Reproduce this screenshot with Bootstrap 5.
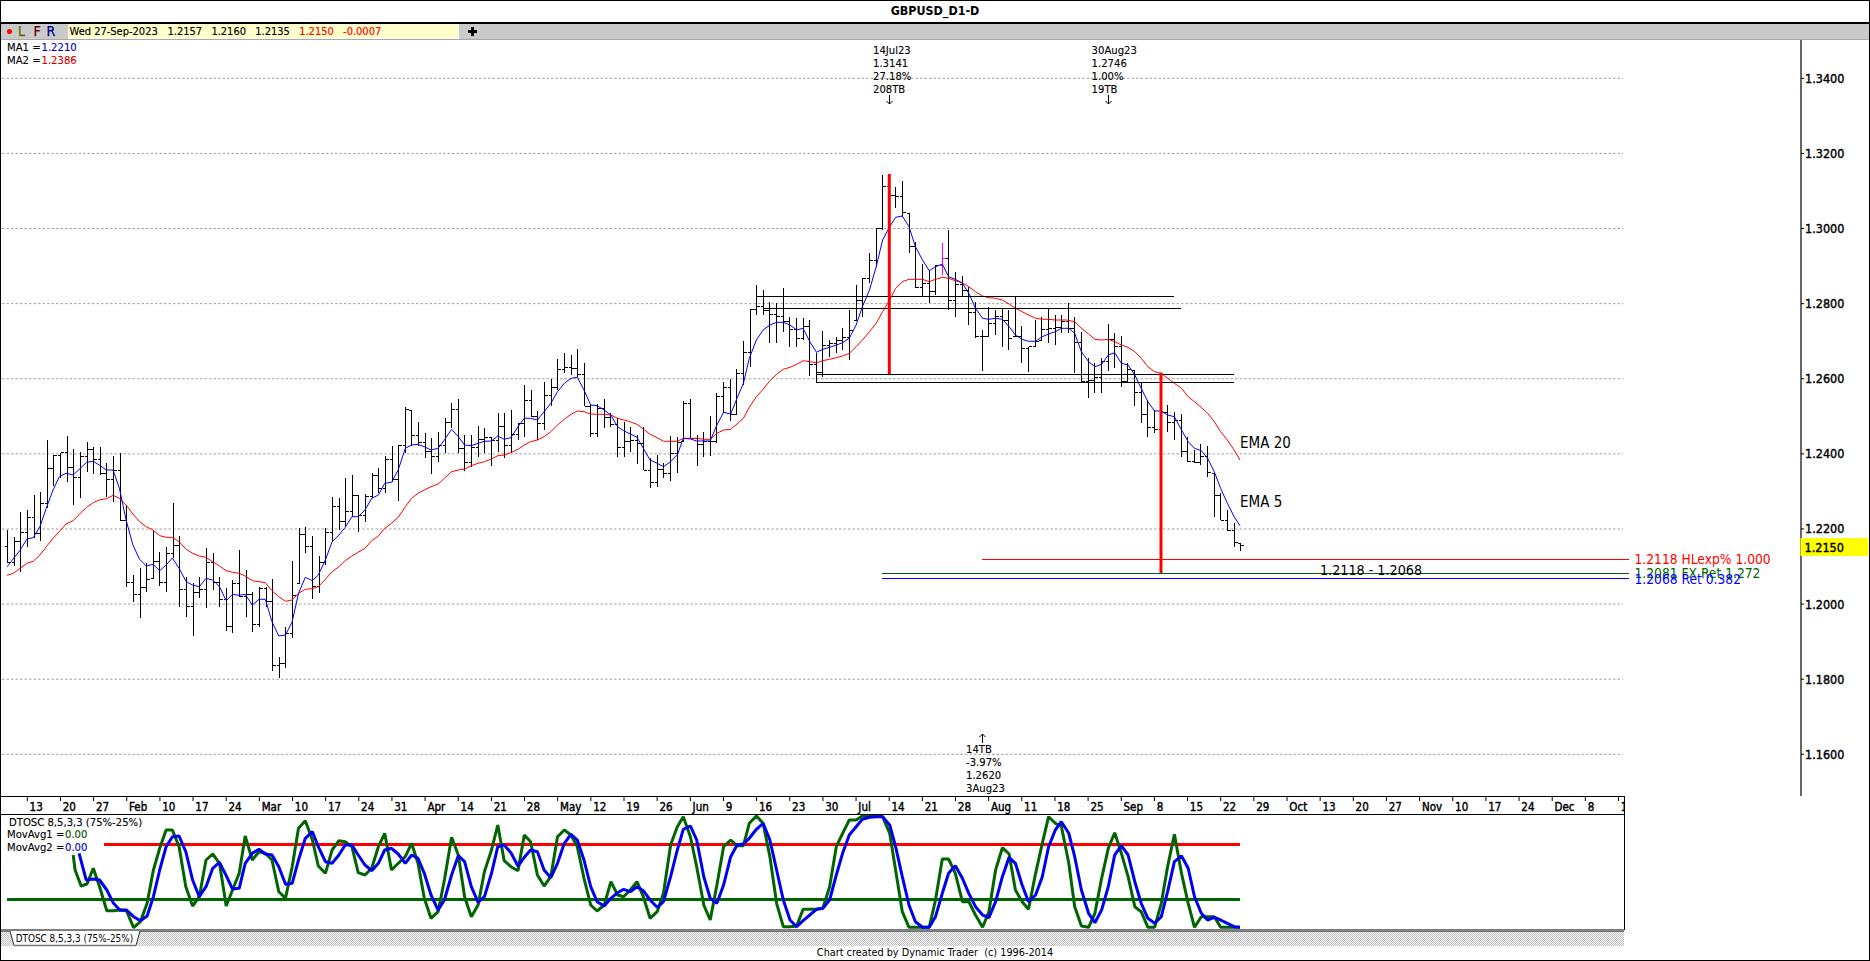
<!doctype html>
<html lang="en">
<head>
<meta charset="utf-8">
<title>GBPUSD_D1-D</title>
<link href="https://cdn.jsdelivr.net/npm/bootstrap@5.3.0/dist/css/bootstrap.min.css" rel="stylesheet">
<style>
html,body{height:961px;margin:0;overflow:hidden;background:#fff}
body{font-family:"DejaVu Sans Condensed","DejaVu Sans",sans-serif;font-stretch:condensed;font-size:11px;line-height:1;color:#000}
.app-frame{height:961px;border:1px solid #000;box-sizing:border-box}
.chart-title{height:21px;line-height:20px;font-size:12.4px;font-weight:700;border-bottom:2px solid #000;box-sizing:content-box}
.tool-strip{height:15px;background:#cacaca;border-bottom:1px solid #a8a8a8;box-sizing:content-box}
.tool-keys{width:67px;height:15px;padding-left:6px}
.key-dot{width:5px;height:5px;border-radius:50%;background:#f00;margin-right:6px}
.key-l,.key-f,.key-r{font-size:14px;line-height:15px;-webkit-text-stroke:.25px currentColor}
.key-l{color:#666600;width:15.5px}.key-f{color:#660000;width:13px}.key-r{color:#000080;width:13px}
.quote-box{width:391px;height:15px;background:#ffffcc;border-right:1px solid #fff;border-bottom:1px solid #fff;padding-left:1.5px;font-size:11px;line-height:15px;white-space:nowrap;-webkit-text-stroke:.15px currentColor}
.q-date{width:98px}.q-num{width:43.9px}
.quote-red{color:#f00}
.plus-mark{width:9px;height:9px;margin-left:9px}
.chart-body{height:891px}
.chart-body svg{display:block;width:100%;height:100%}
.chart-body text{font-family:"DejaVu Sans Condensed","DejaVu Sans",sans-serif;font-stretch:condensed;dominant-baseline:central}
.t-note{font-size:11.2px;stroke:currentColor;stroke-width:.12px}
.t-axis{font-size:12.5px;stroke:#000;stroke-width:.4px}
.t-date{font-size:11.5px;stroke:#000;stroke-width:.4px}
.t-ema{font-size:15px}
.t-big{font-size:14.2px}
.t-side{font-size:13.7px}
.tab-strip{height:15px;width:1623px;background:repeating-conic-gradient(#c4c4c4 0 25%,#f4f4f4 0 50%) 0 0/2px 2px;border-top:1px solid #777;box-sizing:border-box}
.tab-shape{width:140px;height:14px;display:block;overflow:visible}
.tab-shape text{font-family:"DejaVu Sans Condensed","DejaVu Sans",sans-serif;font-stretch:condensed;font-size:9.9px;dominant-baseline:central}
.status-line{height:14px;line-height:14px;font-size:10.8px}
</style>
</head>
<body>
<div class="app-frame d-flex flex-column">
  <div class="chart-title text-center">GBPUSD_D1-D</div>
  <div class="tool-strip d-flex align-items-center">
    <div class="tool-keys d-flex align-items-center">
      <span class="key-dot"></span><span class="key-l">L</span><span class="key-f">F</span><span class="key-r">R</span>
    </div>
    <div class="quote-box d-flex">
      <span class="q-date">Wed 27-Sep-2023</span><span class="q-num">1.2157</span><span class="q-num">1.2160</span><span class="q-num">1.2135</span><span class="q-num quote-red">1.2150</span><span class="quote-red">-0.0007</span>
    </div>
    <svg class="plus-mark" viewBox="0 0 9 9"><path d="M3 0h3v3h3v3H6v3H3V6H0V3h3z" fill="#000"/></svg>
  </div>
  <div class="chart-body flex-grow-0 position-relative">
    <svg id="plot" viewBox="1 40 1868 891" preserveAspectRatio="none" xmlns="http://www.w3.org/2000/svg">
      <g id="grid"></g>
      <g id="bars" shape-rendering="crispEdges"></g>
      <g id="lines"></g>
      <g id="labels"></g>
    </svg>
  </div>
  <div class="tab-strip">
    <svg class="tab-shape" viewBox="0 0 140 14"><path d="M9 -1 L13 13.5 H135 L139 -1" fill="#fff" stroke="#333" stroke-width="1"/><path d="M13 13.5H135" stroke="#777" stroke-width="1.5"/><text x="14.7" y="6.5">DTOSC 8,5,3,3 (75%-25%)</text></svg>
  </div>
  <div class="status-line text-center">Chart created by Dynamic Trader&nbsp; (c) 1996-2014</div>
</div>
<script>
(function(){
var NS='http://www.w3.org/2000/svg';
function el(parent,name,attrs,txt){var e=document.createElementNS(NS,name);for(var k in attrs)e.setAttribute(k,attrs[k]);if(txt!=null)e.textContent=txt;parent.appendChild(e);return e;}
var grid=document.getElementById('grid'),barsG=document.getElementById('bars'),lines=document.getElementById('lines'),labels=document.getElementById('labels');
function bx(i){return 7+6.63*i;}
function py(p){return 78.3+(1.34-p)*3755.6;}
// price grid and axis
for(var k=0;k<10;k++){var p=1.34-0.02*k,y=py(p);
  el(grid,'line',{x1:2,x2:1623,y1:y,y2:y,stroke:'#a0a0a0','stroke-dasharray':'2.5 2','stroke-width':1});
  el(grid,'line',{x1:1801,x2:1804,y1:y,y2:y,stroke:'#000','stroke-width':1});
  el(labels,'text',{x:1805,y:y,'class':'t-axis'},p.toFixed(4));
}
// chart frame
el(grid,'line',{x1:1801,x2:1801,y1:40,y2:796,stroke:'#000','stroke-width':1.2});
el(grid,'line',{x1:1,x2:1624,y1:796.5,y2:796.5,stroke:'#000','stroke-width':1});
el(grid,'line',{x1:1,x2:1624,y1:814.5,y2:814.5,stroke:'#000','stroke-width':1});
el(grid,'line',{x1:1624.5,x2:1624.5,y1:796,y2:930,stroke:'#000','stroke-width':1});
el(grid,'line',{x1:1,x2:1624,y1:930,y2:930,stroke:'#000','stroke-width':1});
// time axis
var dates='13 20 27 Feb 10 17 24 Mar 10 17 24 31 Apr 14 21 28 May 12 19 26 Jun 9 16 23 30 Jul 14 21 28 Aug 11 18 25 Sep 8 15 22 29 Oct 13 20 27 Nov 10 17 24 Dec 8 1'.split(' ');
var clip=el(grid,'clipPath',{id:'dclip'});el(clip,'rect',{x:1,y:790,width:1623,height:30});
var dg=el(labels,'g',{'clip-path':'url(#dclip)'});
dates.forEach(function(d,k){var x=27.3+33.15*k;
  el(grid,'line',{x1:x,x2:x,y1:796,y2:801,stroke:'#000','stroke-width':1});
  el(dg,'text',{x:x+2.3,y:807,'class':'t-date'},d);
});
// bars [top,bottom]: 0..111 in zoom z (+960), 112+ absolute Z (3*y)
var A=[630,728,652,738,575,755,570,680,525,655,517,662,360,565,405,498,398,473,348,485,388,555,395,535,366,455,380,462,380,465,430,530,408,545,400,602,555,800,765,845,745,893,730,815,632,775,697,797,680,815,548,715,648,862,770,890,790,947,770,835,685,865,700,810,770,860,805,933,780,938,690,830,750,891,815,936,800,921,800,860,778,1052,1011,1073,921,1043,723,954,623,790,620,698,648,838,708,820,625,735,532,665,535,630,475,620,465,590,525,635,522,605,460,535,445,520,407,520,377,485,375,542,262,400,272,378,305,378,340,413,353,462,337,425,295,400,250,325,237,400,345,452,345,440,318,410,325,398,350,437,280,395,280,415,270,400,310,360,195,350,210,290,272,360,185,330,178,258,118,210,98,160,105,165,87,172,128,258,255,350,252,350,237,325,280,322,295,410,305,410,320,395,345,432,322,450,415,503,405,500,430,475,348,482,350,458,243,365,237,355,345,437,335,410,288,407,220,368,185,280,178,302,148,283,62,195];
var B=[928,1100,855,945,870,945,905,1030,910,1030,865,995,950,1040,955,1040,955,1020,960,1127,1060,1125,992,1130,1020,1070,1010,1060,985,1050,930,1080,855,960,835,950,760,850,685,800,525,690,525,585,560,625,543,650,640,760,725,865,793,890,810,910,795,885,730,825,690,930,815,950,828,890,860,975,905,1015,990,1112,920,1010,930,1005,925,1040,930,1050,888,1010,978,1090,1040,1115,960,1040,950,1020,925,1030,945,1035,945,1000,910,1000,950,1120,995,1145,1075,1195,1090,1180,1075,1178,973,1113,1000,1105,1008,1160,1090,1150,1110,1217,1145,1270,1200,1310,1230,1300,1195,1300,1215,1295,1235,1320,1243,1370,1310,1385,1350,1390,1332,1395,1338,1430,1420,1550,1480,1560,1530,1592,1570,1640,1629,1652];
var bars=[];for(var i=0;i<A.length;i+=2)bars.push([(A[i]+960)/3,(A[i+1]+960)/3]);for(i=0;i<B.length;i+=2)bars.push([B[i]/3,B[i+1]/3]);
function seg(x0,sc,yo,f){var o=[];for(var i=0;i<f.length;i+=2)o.push([x0+f[i]/sc,(f[i+1]+yo)/3]);return o;}
var S=2.529;
var blue=[].concat(
seg(0,S,960,[18,740,51,690,68,657,84,653,101,620,117,565,134,510,150,470,167,460,185,465,203,445,219,427,236,424,251,435,269,450,286,450,302,505,319,600,336,675,353,718,370,738,387,733,404,752,420,735,436,714,453,745,471,785,487,795,504,800,521,775,538,780,555,800,572,842,588,823,605,826,620,823,638,855,655,838,671,838,688,905,705,948,722,945,739,905,755,820,772,772,790,782,805,765,823,720,840,665,857,645,873,622,890,590,906,590,923,570,940,535,957,525,973,490,990,487,1007,450,1025,385,1041,375,1057,373,1073,380,1090,390,1108,385,1124,360,1142,328,1159,350,1175,375,1192,377,1209,370,1225,364,1243,363,1259,348,1275,358,1292,353,1310,320,1326,295,1342,295,1359,300,1376,275,1393,250,1410,215,1427,190,1444,175,1460,172,1477,210,1494,255,1510,257,1528,270,1545,285,1562,320]),
seg(620,S,960,[9,332,26,342,43,352,59,385,76,420,94,430,110,440,128,425,145,405,160,355,178,357,194,363,212,363,228,363,245,315,262,277,280,282,296,235,312,190,327,115,345,60,362,30,379,15,396,7,413,7,430,15,447,30,463,25,480,65,497,97,513,88,530,82,547,75,563,68,580,55,597,15]),
seg(620,S,0,[613,920,631,870,648,800,664,720,682,680,697,652,714,648,731,680,747,740,765,780,782,812,798,800,815,792,831,830,848,838,866,850,882,880,899,925,917,955,933,958,950,955,967,958]),
seg(620,S,960,[984,20,1000,45,1017,58,1033,64,1051,64,1068,50,1084,42,1101,35,1116,25,1135,25,1150,40,1167,95,1185,125,1201,140,1218,133,1235,105,1251,98,1268,130,1285,135,1302,165,1318,205,1335,245,1352,273,1369,273,1385,285,1402,290,1420,330,1437,365,1453,385,1470,392,1486,415,1503,455,1519,505,1536,550,1553,590,1568,617])
);
var red=[].concat(
seg(0,S,960,[18,766,34,760,51,745,68,730,84,724,101,705,117,680,134,655,150,635,167,612,185,602,203,580,219,562,236,548,251,540,269,536,286,526,302,535,319,555,336,582,353,605,370,620,387,630,404,647,420,652,436,652,453,665,471,688,487,700,504,708,521,712,538,725,555,738,572,752,588,757,605,760,620,768,638,782,655,785,671,788,688,812,705,830,722,844,739,840,755,820,772,808,790,806,805,800,823,778,840,755,857,740,873,722,890,708,906,697,923,685,940,662,957,648,973,625,990,610,1007,592,1025,560,1041,535,1057,520,1073,510,1090,500,1108,492,1124,475,1142,455,1159,450,1175,447,1192,437,1209,430,1225,425,1243,417,1259,407,1275,405,1292,398,1310,388,1326,375,1342,365,1359,360,1376,350,1393,335,1410,315,1427,298,1444,283,1460,273,1477,275,1494,282,1510,283,1528,283,1545,285,1562,295]),
seg(620,S,960,[9,300,20,303,43,313,59,327,76,343,94,353,110,364,128,364,145,364,160,355,178,355,194,355,212,358,228,358,245,340,262,330,280,328,296,312,312,295,327,262,345,230,362,208,379,182,396,163,413,148,430,142,447,133,463,122,480,125,497,128,513,122,530,118,547,113,563,108,580,100,597,80,613,60,631,35,648,10]),
seg(620,S,0,[664,935,682,900,697,865,714,845,731,838,747,838,765,838,782,845,798,838,815,832,831,835,848,842,866,848,882,860,899,875,917,888,933,893,950,895,967,900,984,912,1000,925,1017,935,1033,945,1051,955,1068,958,1084,958]),
seg(620,S,960,[1101,0,1130,0,1150,5,1167,25,1185,42,1201,58,1218,60,1235,58,1251,65,1268,75,1285,82,1302,95,1318,115,1335,140,1352,155,1369,160,1385,175,1402,190,1420,205,1437,230,1453,245,1470,262,1486,280,1503,305,1519,335,1536,360,1553,390,1568,420])
);
function interp(line,x){if(x<=line[0][0])return line[0][1];for(var i=1;i<line.length;i++){if(x<=line[i][0]){var a=line[i-1],b=line[i];return a[1]+(b[1]-a[1])*(x-a[0])/(b[0]-a[0]);}}return line[line.length-1][1];}
var prevC=null;
bars.forEach(function(b,i){
  var x=Math.round(bx(i))+.5,col=(i===141)?'#f0f':'#000';
  var e0=interp(blue,bx(i-1)),e1=interp(blue,bx(i));
  var c=Math.min(b[1],Math.max(b[0],e0+3*(e1-e0)));
  var o=prevC==null?(b[0]+b[1])/2:Math.min(b[1],Math.max(b[0],prevC));
  prevC=c;
  el(barsG,'line',{x1:x,x2:x,y1:b[0],y2:b[1],stroke:col,'stroke-width':(i%2===0)?1.4:1});
  el(barsG,'line',{x1:x-3,x2:x,y1:o,y2:o,stroke:col,'stroke-width':1});
  el(barsG,'line',{x1:x,x2:x+3,y1:c,y2:c,stroke:col,'stroke-width':1});
});
function pts(a){return a.map(function(p){return p[0].toFixed(1)+','+p[1].toFixed(1);}).join(' ');}
el(lines,'polyline',{points:pts(red),fill:'none',stroke:'#f00','stroke-width':1});
el(lines,'polyline',{points:pts(blue),fill:'none',stroke:'#00f','stroke-width':1});
// support/resistance boxes
function hl(x1,x2,y,c,w){el(lines,'line',{x1:x1,x2:x2,y1:y,y2:y,stroke:c,'stroke-width':w||1});}
hl(756,1174,296.5,'#000');hl(763.5,1181,308.5,'#000');hl(816.5,1234,374.5,'#000');hl(816.5,1234,382.5,'#000');
el(lines,'line',{x1:816.5,x2:816.5,y1:374,y2:383,stroke:'#000','stroke-width':1});
el(lines,'line',{x1:889.3,x2:889.3,y1:174,y2:374,stroke:'#f00','stroke-width':3});
el(lines,'line',{x1:1161,x2:1161,y1:372.7,y2:573,stroke:'#f00','stroke-width':3});
hl(982,1629,559.5,'#f00');hl(882,1629,573.5,'#006400');hl(882,1629,578.5,'#00f');
// oscillator
var clipO=el(grid,'clipPath',{id:'oclip'});el(clipO,'rect',{x:1,y:815,width:1623,height:115});
var og=el(lines,'g',{'clip-path':'url(#oclip)'});
function hl2(x1,x2,y,c,w){el(og,'line',{x1:x1,x2:x2,y1:y,y2:y,stroke:c,'stroke-width':w});}
hl2(104,1240,844.5,'#f00',3);hl2(7,1240,899.5,'#006400',3);
function oseg(x0,f){var o=[];for(var i=0;i<f.length;i+=2)o.push([x0+f[i]/S,700+f[i+1]/3]);return o;}
var ogreen=[].concat(oseg(0,[185,465,190,510,205,558,220,552,236,505,252,560,270,632,287,632,303,630,320,632,338,683,355,665,372,610,388,510,404,445,420,390,436,390,453,440,470,560,487,618,504,590,521,480,538,462,555,490,572,618,588,570,605,520,620,408,638,480,655,455,671,460,688,480,705,575,722,595,739,500,755,385,772,362,790,420,805,498,823,520,840,450,857,422,873,425,890,440,906,518,923,525,940,505,957,440,973,400,990,510,1007,490,1025,470,1041,430,1057,490,1073,595,1090,655,1108,635,1124,540,1142,412,1159,465,1175,590,1192,650,1209,615,1225,515,1243,450,1259,375,1275,482,1292,500,1310,512,1326,405,1342,425,1359,525,1376,558,1393,530,1410,410,1427,390,1444,405,1460,440,1477,535,1494,615,1510,633,1528,615,1545,545,1562,585]),
oseg(620,[9,590,26,570,43,545,59,590,76,655,94,635,110,580,128,435,145,380,160,350,178,410,194,500,212,615,228,660,245,555,262,440,280,420,296,437,312,437,327,370,345,348,362,370,379,470,396,610,413,680,430,680,447,678,463,628,480,628,497,628,513,625,530,560,547,440,563,400,580,360,597,360,613,348,631,348,648,348,664,350,682,400,697,510,714,635,731,682,747,682,765,682,782,682,798,600,815,477,831,477,848,520,866,605,882,605,899,645,917,682,933,635,950,510,967,443,984,462,1000,570,1017,605,1033,628,1051,520,1068,430,1084,350,1101,370,1116,378,1135,490,1150,620,1167,678,1185,682,1201,640,1218,535,1235,445,1251,398,1268,460,1285,530,1302,620,1318,635,1335,682,1352,682,1369,610,1385,500,1402,403,1420,520,1437,610,1453,682,1470,650,1486,650,1503,650,1519,682,1536,682,1553,682,1568,682]));
var oblue=[].concat(oseg(0,[200,460,218,540,236,537,252,540,270,570,287,610,303,630,320,630,338,650,355,662,372,648,388,590,404,510,420,440,436,410,453,408,470,455,487,540,504,590,521,560,538,505,555,487,572,527,588,567,605,565,620,490,638,460,655,448,671,462,688,465,705,500,722,553,739,550,755,480,772,415,790,395,805,440,823,485,840,490,857,465,873,435,890,435,906,465,923,495,940,512,957,490,973,450,990,445,1007,462,1025,490,1041,465,1057,475,1073,520,1090,585,1108,630,1124,600,1142,525,1159,467,1175,485,1192,560,1209,607,1225,590,1243,520,1259,440,1275,435,1292,458,1310,498,1326,472,1342,450,1359,455,1376,510,1393,533,1410,490,1427,430,1444,403,1460,420,1477,480,1494,560,1510,605,1528,618,1545,595,1562,578]),
oseg(620,[9,568,26,575,43,560,59,572,76,600,94,622,110,605,128,530,145,450,160,388,178,378,194,420,212,530,228,595,245,610,262,555,280,470,296,435,312,432,327,415,345,388,362,370,379,420,396,510,413,600,430,660,447,680,463,662,480,645,497,628,513,625,530,600,547,525,563,460,580,405,597,380,613,358,631,352,648,350,664,350,682,375,697,440,714,530,731,615,747,665,765,682,782,682,798,650,815,580,831,520,848,497,866,535,882,580,899,620,917,645,933,653,950,605,967,530,984,472,1000,490,1017,555,1033,605,1051,585,1068,530,1084,440,1101,390,1116,365,1135,400,1150,470,1167,570,1185,640,1201,668,1218,630,1235,560,1251,465,1268,437,1285,465,1302,545,1318,610,1335,655,1352,670,1369,650,1385,575,1402,485,1420,468,1437,505,1453,590,1470,640,1486,660,1503,652,1519,660,1536,670,1553,680,1568,682]));
el(og,'polyline',{points:pts(ogreen),fill:'none',stroke:'#006400','stroke-width':3,'stroke-linejoin':'bevel'});
el(og,'polyline',{points:pts(oblue),fill:'none',stroke:'#0000f0','stroke-width':3,'stroke-linejoin':'bevel'});
// text
function T(x,y,t,cls,fill){var a={x:x,y:y};if(cls)a['class']=cls;if(fill)a.fill=fill;return el(labels,'text',a,t);}
var m1=T(7,47,'MA1 =','t-note');el(m1,'tspan',{fill:'#00f',x:41.5},'1.2210');
var m2=T(7,60,'MA2 =','t-note');el(m2,'tspan',{fill:'#f00',x:41.5},'1.2386');
['14Jul23','1.3141','27.18%','208TB'].forEach(function(t,k){T(873,50+13*k,t,'t-note');});
['30Aug23','1.2746','1.00%','19TB'].forEach(function(t,k){T(1091.6,50+13*k,t,'t-note');});
['14TB','-3.97%','1.2620','3Aug23'].forEach(function(t,k){T(966,749+13*k,t,'t-note');});
function arrow(x,y0,dir){var tip=dir>0?y0+9:y0,tail=dir>0?y0:y0+9;el(lines,'path',{d:'M'+x+' '+tail+'V'+tip+'M'+(x-3)+' '+(tip-3*dir)+'L'+x+' '+tip+'L'+(x+3)+' '+(tip-3*dir),fill:'none',stroke:'#000','stroke-width':1});}
arrow(889.5,95,1);arrow(1108.5,95,1);arrow(982.5,734,-1);
T(1240,443,'EMA 20','t-ema');T(1240,502,'EMA 5','t-ema');
T(1320,569.5,'1.2118 - 1.2068','t-big');
T(1634.5,559,'1.2118 HLexp% 1.000','t-side','#f00');
T(1634.5,573,'1.2081 FX Ret 1.272','t-side','#006400');
T(1634.5,578.5,'1.2068 Ret 0.382','t-side','#00f');
el(grid,'rect',{x:1800.5,y:538,width:68,height:18,fill:'#ff0'});
T(1804.5,547,'1.2150','t-axis');
T(9,822.6,'DTOSC 8,5,3,3 (75%-25%)','t-note');
var g1=T(7,834,'MovAvg1 =','t-note');el(g1,'tspan',{fill:'#006400',x:65},'0.00');
var g2=T(7,847,'MovAvg2 =','t-note');el(g2,'tspan',{fill:'#00f',x:65},'0.00');
})();
</script>
<script src="https://cdn.jsdelivr.net/npm/bootstrap@5.3.0/dist/js/bootstrap.bundle.min.js"></script>
</body>
</html>
